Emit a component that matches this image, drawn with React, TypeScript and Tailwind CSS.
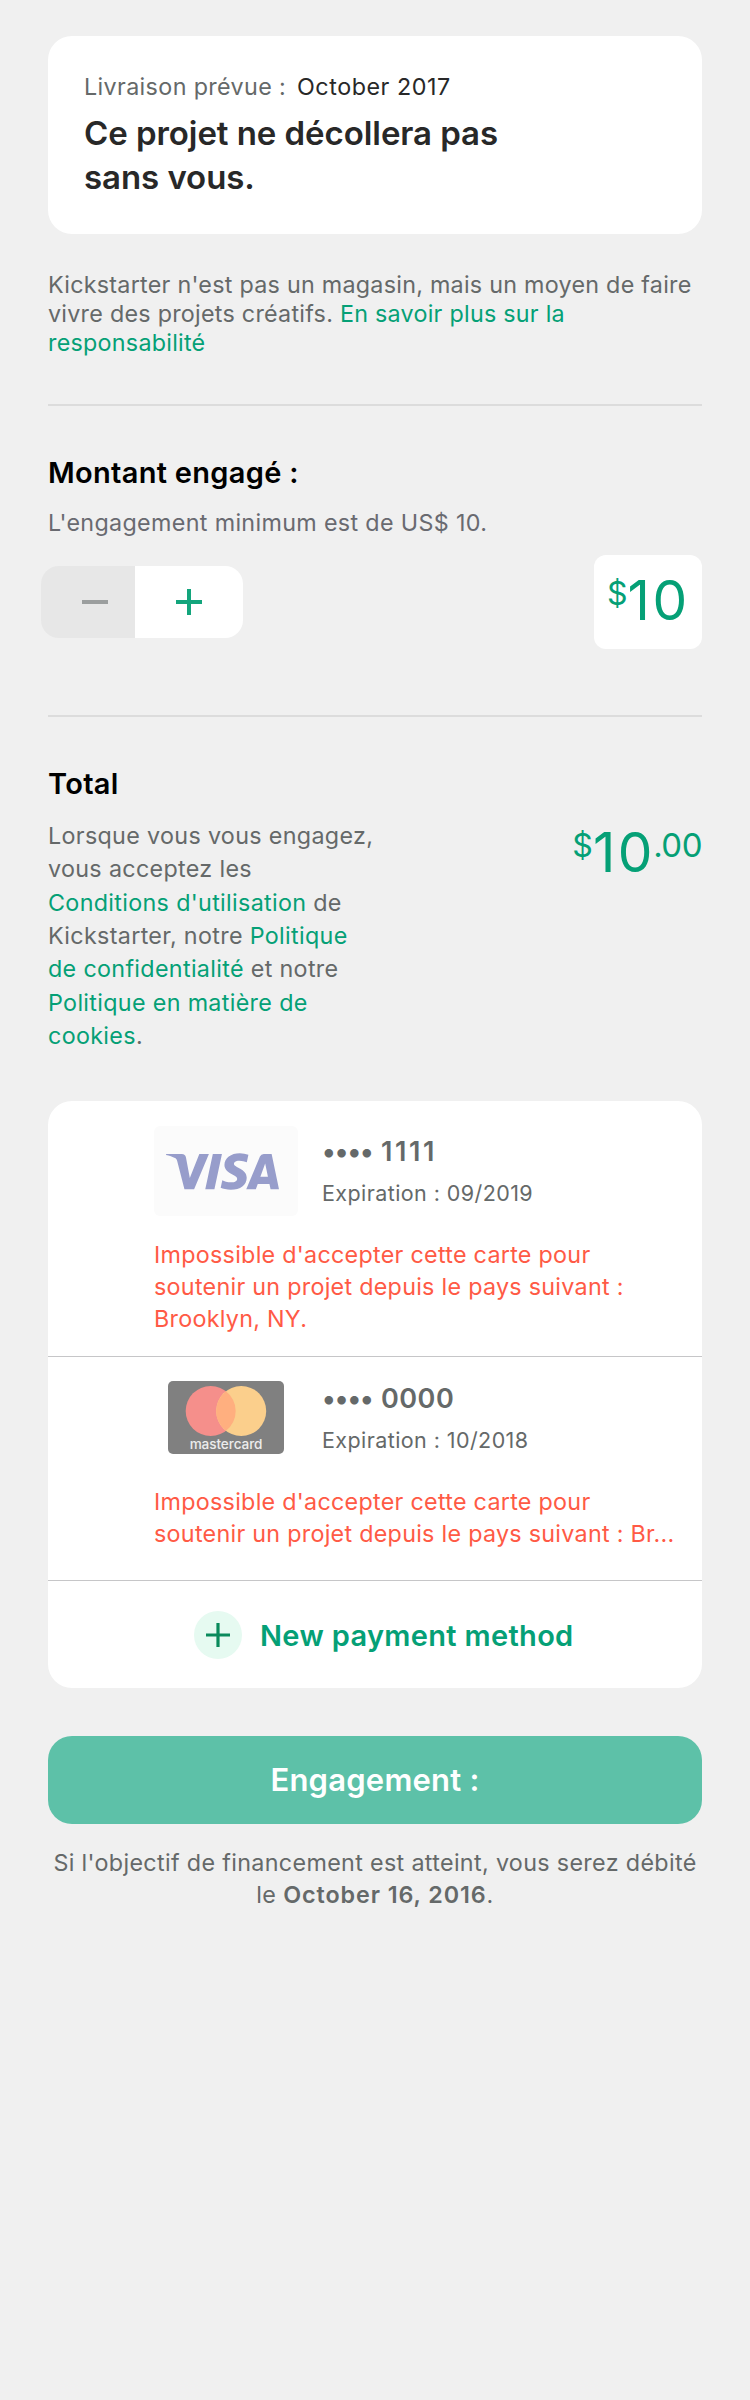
import type { ReactNode } from "react";
import { SiVisa } from "react-icons/si";

const Link = ({ children }: { children: ReactNode }) => (
  <a className="text-[#05a076]">{children}</a>
);

function Divider() {
  return <div className="h-[2px] bg-[#dcdcdc]" />;
}

function Summary() {
  return (
    <section className="h-[198px] rounded-[24px] bg-white px-[36px] pt-[35px]">
      <div className="flex whitespace-nowrap text-[23.3px] leading-[32px]">
        <span className="w-[213px] tracking-[0.37px] text-[#656969]">Livraison prévue :</span>
        <span className="tracking-[0.54px] text-[#282828]">October 2017</span>
      </div>
      <h1 className="mt-[8px] text-[33px] font-semibold leading-[44px] tracking-[-0.06px] text-[#282828]">
        Ce projet ne décollera pas
        <br />
        sans vous.
      </h1>
    </section>
  );
}

function Stepper() {
  return (
    <div className="-ml-[7px] flex h-[72px] w-[202px] overflow-hidden rounded-[18px]">
      <button className="flex w-[94px] items-center bg-[#e7e7e7] pl-[41px]">
        <svg className="h-[26px] w-[26px]" viewBox="0 0 26 26">
          <path d="M0 13H26" stroke="#9b9e9e" strokeWidth="4" />
        </svg>
      </button>
      <button className="flex flex-1 items-center bg-white pl-[41px]">
        <svg className="h-[26px] w-[26px]" viewBox="0 0 26 26">
          <path d="M0 13H26M13 0V26" stroke="#13a57c" strokeWidth="4" />
        </svg>
      </button>
    </div>
  );
}

function Amount({ value, cents }: { value: string; cents?: string }) {
  return (
    <div className="whitespace-nowrap text-[55px] leading-[60px] text-[#05a076]">
      <span className="align-[15px] text-[32px] leading-none">$</span>
      <span className="tracking-[2.6px]">{value}</span>
      {cents && (
        <span className="-ml-[2px] align-[15px] text-[33px] leading-none tracking-[-0.49px]">{cents}</span>
      )}
    </div>
  );
}

function VisaLogo() {
  return (
    <div className="flex h-[90px] w-[144px] items-center justify-center rounded-[6px] bg-[#fbfbfb] pr-[7px]">
      <SiVisa className="h-[113px] w-[113px] shrink-0 text-[#979dcb]" />
    </div>
  );
}

function MastercardLogo() {
  return (
    <div className="ml-[14px] h-[73px] w-[116px] rounded-[5px] bg-[#808080]">
      <svg className="block h-[56px] w-[116px]" viewBox="0 0 116 56">
        <circle cx="42.7" cy="30" r="25" fill="#f58f8b" />
        <circle cx="73.2" cy="30" r="25" fill="#fbcf8c" />
        <path d="M57.95 10.2A25 25 0 0 1 57.95 49.8A25 25 0 0 1 57.95 10.2Z" fill="#ffaf7f" />
      </svg>
      <div className="-mt-px text-center text-[13.6px] font-medium leading-[16px] tracking-[-0.1px] text-[#ececec]">
        mastercard
      </div>
    </div>
  );
}

function CardDetails({
  digits,
  digitsClass,
  expiry,
}: {
  digits: string;
  digitsClass: string;
  expiry: string;
}) {
  return (
    <div className="whitespace-nowrap pt-px text-[#656969]">
      <div className="flex text-[27px] font-semibold leading-[34px]">
        <span className="w-[59px] tracking-[-0.9px]">••••</span>
        <span className={digitsClass}>{digits}</span>
      </div>
      <div className="mt-[10px] text-[21.5px] leading-[28px] tracking-[0.42px]">Expiration : {expiry}</div>
    </div>
  );
}

function PaymentMethods() {
  return (
    <section className="mt-[49px] h-[587px] rounded-[24px] bg-white">
      <div className="h-[256px] border-b border-[#c6c6c8] pl-[106px] pt-[25px]">
        <div className="flex h-[90px]">
          <div className="w-[168px]">
            <VisaLogo />
          </div>
          <div className="pt-[8px]">
            <CardDetails digits="1111" digitsClass="tracking-[2.6px]" expiry="09/2019" />
          </div>
        </div>
        <p className="mt-[23px] whitespace-nowrap text-[23.3px] leading-[32px] tracking-[0.28px] text-[#ff5a45]">
          Impossible d'accepter cette carte pour
          <br />
          soutenir un projet depuis le pays suivant :
          <br />
          Brooklyn, NY.
        </p>
      </div>
      <div className="h-[224px] border-b border-[#c6c6c8] pl-[106px] pt-[24px]">
        <div className="flex h-[73px]">
          <div className="w-[168px]">
            <MastercardLogo />
          </div>
          <CardDetails digits="0000" digitsClass="tracking-[0.5px]" expiry="10/2018" />
        </div>
        <p className="mt-[32px] whitespace-nowrap text-[23.3px] leading-[32px] tracking-[0.28px] text-[#ff5a45]">
          Impossible d'accepter cette carte pour
          <br />
          soutenir un projet depuis le pays suivant : Br...
        </p>
      </div>
      <button className="flex h-[107px] w-full items-center pl-[146px]">
        <span className="flex h-[48px] w-[48px] items-center justify-center rounded-full bg-[#e6faf1]">
          <svg className="h-[24px] w-[24px]" viewBox="0 0 24 24">
            <path d="M0 12H24M12 0V24" stroke="#0a8a5c" strokeWidth="3.2" />
          </svg>
        </span>
        <span className="ml-[18px] whitespace-nowrap pt-[3px] text-[29px] font-semibold leading-[36px] tracking-[0.33px] text-[#05a076]">
          New payment method
        </span>
      </button>
    </section>
  );
}

export default function App() {
  return (
    <main className="h-[2400px] w-[750px] bg-[#f0f0f0] px-[48px] pt-[36px] font-['Inter',sans-serif]">
      <Summary />
      <p className="mb-[47px] mt-[36px] whitespace-nowrap text-[23.3px] leading-[29px] tracking-[0.26px] text-[#656969]">
        Kickstarter n'est pas un magasin, mais un moyen de faire
        <br />
        vivre des projets créatifs. <Link>En savoir plus sur la</Link>
        <br />
        <Link>responsabilité</Link>
      </p>
      <Divider />

      <section className="pb-[66px]">
        <h2 className="mt-[49px] text-[29px] font-semibold leading-[36px] tracking-[0.3px] text-black">
          Montant engagé :
        </h2>
        <p className="mt-[16px] text-[23.3px] leading-[32px] tracking-[0.34px] text-[#696a70]">
          L'engagement minimum est de US$ 10.
        </p>
        <div className="mt-[16px] flex h-[94px] items-center justify-between">
          <Stepper />
          <div className="h-[94px] w-[108px] rounded-[12px] bg-white pl-[13px] pt-[15px]">
            <Amount value="10" />
          </div>
        </div>
      </section>
      <Divider />

      <section>
        <h2 className="mt-[49px] text-[29px] font-semibold leading-[36px] tracking-[0.3px] text-black">Total</h2>
        <div className="mt-[17px] flex h-[233px] justify-between">
          <p className="whitespace-nowrap text-[23.3px] leading-[33.33px] tracking-[0.33px] text-[#656969]">
            Lorsque vous vous engagez,
            <br />
            vous acceptez les
            <br />
            <Link>Conditions d'utilisation</Link> de
            <br />
            Kickstarter, notre <Link>Politique</Link>
            <br />
            <Link>de confidentialité</Link> et notre
            <br />
            <Link>Politique en matière de</Link>
            <br />
            <Link>cookies</Link>.
          </p>
          <div className="pt-[3px]">
            <Amount value="10" cents=".00" />
          </div>
        </div>
      </section>

      <PaymentMethods />

      <button className="mt-[48px] block h-[88px] w-full rounded-[24px] bg-[#5dc1a8] text-center text-[31px] font-semibold leading-[88px] tracking-[0.22px] text-white">
        Engagement :
      </button>
      <p className="mt-[23px] whitespace-nowrap text-center text-[23.3px] leading-[32px] tracking-[0.34px] text-[#656969]">
        Si l'objectif de financement est atteint, vous serez débité
        <br />
        le <strong className="font-semibold tracking-[0.93px]">October 16, 2016</strong>.
      </p>
    </main>
  );
}
